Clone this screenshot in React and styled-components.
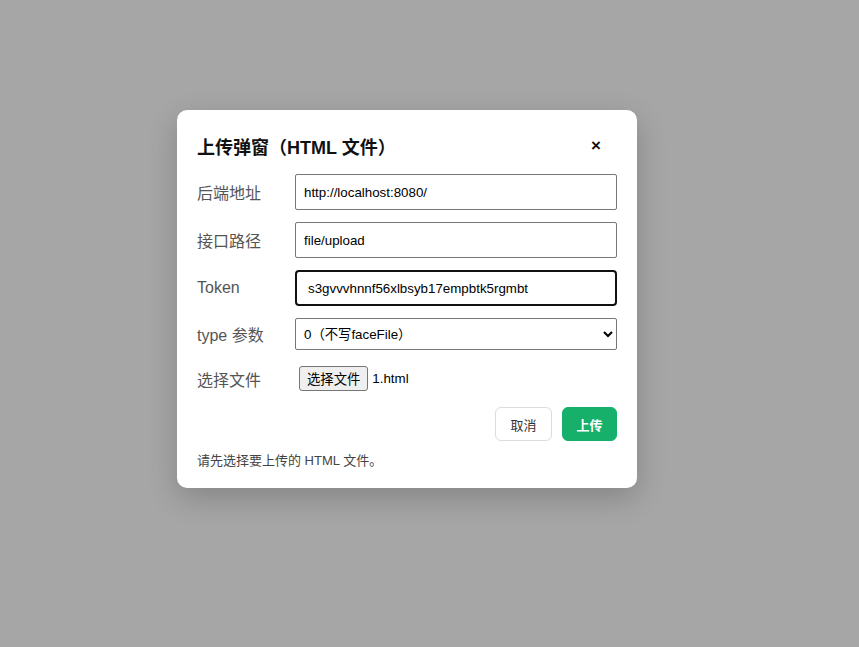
import React from "react";
import styled, { createGlobalStyle } from "styled-components";

const Global = createGlobalStyle`
  html, body { margin: 0; padding: 0; height: 100%; }
  body {
    background: #a6a6a6;
    font-family: "Liberation Sans", Arial, "Noto Sans CJK SC", sans-serif;
  }
  #root { height: 100%; }
`;

const Overlay = styled.div`
  width: 859px;
  height: 647px;
  display: flex;
  justify-content: flex-start;
  align-items: flex-start;
  padding: 110px 0 0 177px;
  box-sizing: border-box;
`;

const Modal = styled.div`
  width: 460px;
  height: 378px;
  box-sizing: border-box;
  background: #fff;
  border-radius: 10px;
  box-shadow: 0 10px 30px rgba(0, 0, 0, 0.2);
  padding: 20px 20px 0 20px;
  display: flex;
  flex-direction: column;
  gap: 12px;
`;

const Header = styled.div`
  height: 32px;
  display: flex;
  align-items: center;
  justify-content: space-between;
`;

const Title = styled.h2`
  margin: 0;
  font-size: 18px;
  font-weight: 700;
  color: #111;
  font-family: "Liberation Sans", Arial, "Noto Sans CJK SC", sans-serif;
`;

const Close = styled.button`
  width: 42px;
  height: 32px;
  border: none;
  background: transparent;
  font-size: 17px;
  font-weight: 700;
  color: #111;
  cursor: pointer;
  padding: 0;
  font-family: "Liberation Sans", Arial, sans-serif;
`;

const Row = styled.div`
  display: grid;
  grid-template-columns: 86px 1fr;
  column-gap: 12px;
  align-items: center;
  height: ${(p) => p.$h}px;
`;

const Label = styled.label`
  font-size: 16px;
  color: #555;
  font-family: "Liberation Sans", Arial, "Noto Sans CJK SC", sans-serif;
`;

const Input = styled.input`
  box-sizing: border-box;
  width: 100%;
  height: 36px;
  border: ${(p) => (p.$focused ? "2px solid #111" : "1px solid #767676")};
  border-radius: ${(p) => (p.$focused ? "4px" : "2px")};
  padding: 0 ${(p) => (p.$focused ? "11px" : "8px")};
  font-size: 13.33px;
  color: #000;
  background: #fff;
  outline: none;
  font-family: "Liberation Sans", Arial, "Noto Sans CJK SC", sans-serif;
`;

const Select = styled.select`
  box-sizing: border-box;
  width: 100%;
  height: 32px;
  border: 1px solid #767676;
  border-radius: 2px;
  padding: 0 4px;
  font-size: 13.33px;
  color: #000;
  background: #fff;
  font-family: "Liberation Sans", Arial, "Noto Sans CJK SC", sans-serif;
`;

const FileWrap = styled.div`
  display: flex;
  align-items: center;
  gap: 4px;
  padding-left: 4px;
`;

const FileButton = styled.button`
  height: 25px;
  box-sizing: border-box;
  border: 1px solid #767676;
  border-radius: 3px;
  background: #efefef;
  padding: 0 7px;
  font-size: 13.33px;
  color: #000;
  font-family: "Liberation Sans", Arial, "Noto Sans CJK SC", sans-serif;
`;

const FileName = styled.span`
  font-size: 13.33px;
  color: #000;
`;

const Actions = styled.div`
  display: flex;
  justify-content: flex-end;
  gap: 10px;
  height: 34px;
`;

const Btn = styled.button`
  height: 34px;
  box-sizing: border-box;
  padding: 0 ${(p) => (p.$primary ? "13.5px" : "14.5px")};
  border-radius: 6px;
  border: 1px solid ${(p) => (p.$primary ? "#17b06b" : "#dcdcdc")};
  background: ${(p) => (p.$primary ? "#17b06b" : "#fff")};
  color: ${(p) => (p.$primary ? "#fff" : "#333")};
  font-weight: ${(p) => (p.$primary ? 700 : 400)};
  font-size: 13px;
  cursor: pointer;
  font-family: "Liberation Sans", Arial, "Noto Sans CJK SC", sans-serif;
`;

const Status = styled.div`
  font-size: 13px;
  line-height: 15px;
  color: #444;
  font-family: "Liberation Sans", Arial, "Noto Sans CJK SC", sans-serif;
`;

export default function App() {
  return (
    <>
      <Global />
      <Overlay>
        <Modal>
          <Header>
            <Title>上传弹窗（HTML 文件）</Title>
            <Close aria-label="close">×</Close>
          </Header>
          <Row $h={36}>
            <Label>后端地址</Label>
            <Input defaultValue="http://localhost:8080/" />
          </Row>
          <Row $h={36}>
            <Label>接口路径</Label>
            <Input defaultValue="file/upload" />
          </Row>
          <Row $h={36}>
            <Label>Token</Label>
            <Input $focused defaultValue="s3gvvvhnnf56xlbsyb17empbtk5rgmbt" />
          </Row>
          <Row $h={32}>
            <Label>type 参数</Label>
            <Select defaultValue="0">
              <option value="0">0（不写faceFile）</option>
              <option value="1">1</option>
            </Select>
          </Row>
          <Row $h={33}>
            <Label>选择文件</Label>
            <FileWrap>
              <FileButton>选择文件</FileButton>
              <FileName>1.html</FileName>
            </FileWrap>
          </Row>
          <Actions>
            <Btn>取消</Btn>
            <Btn $primary>上传</Btn>
          </Actions>
          <Status>请先选择要上传的 HTML 文件。</Status>
        </Modal>
      </Overlay>
    </>
  );
}
